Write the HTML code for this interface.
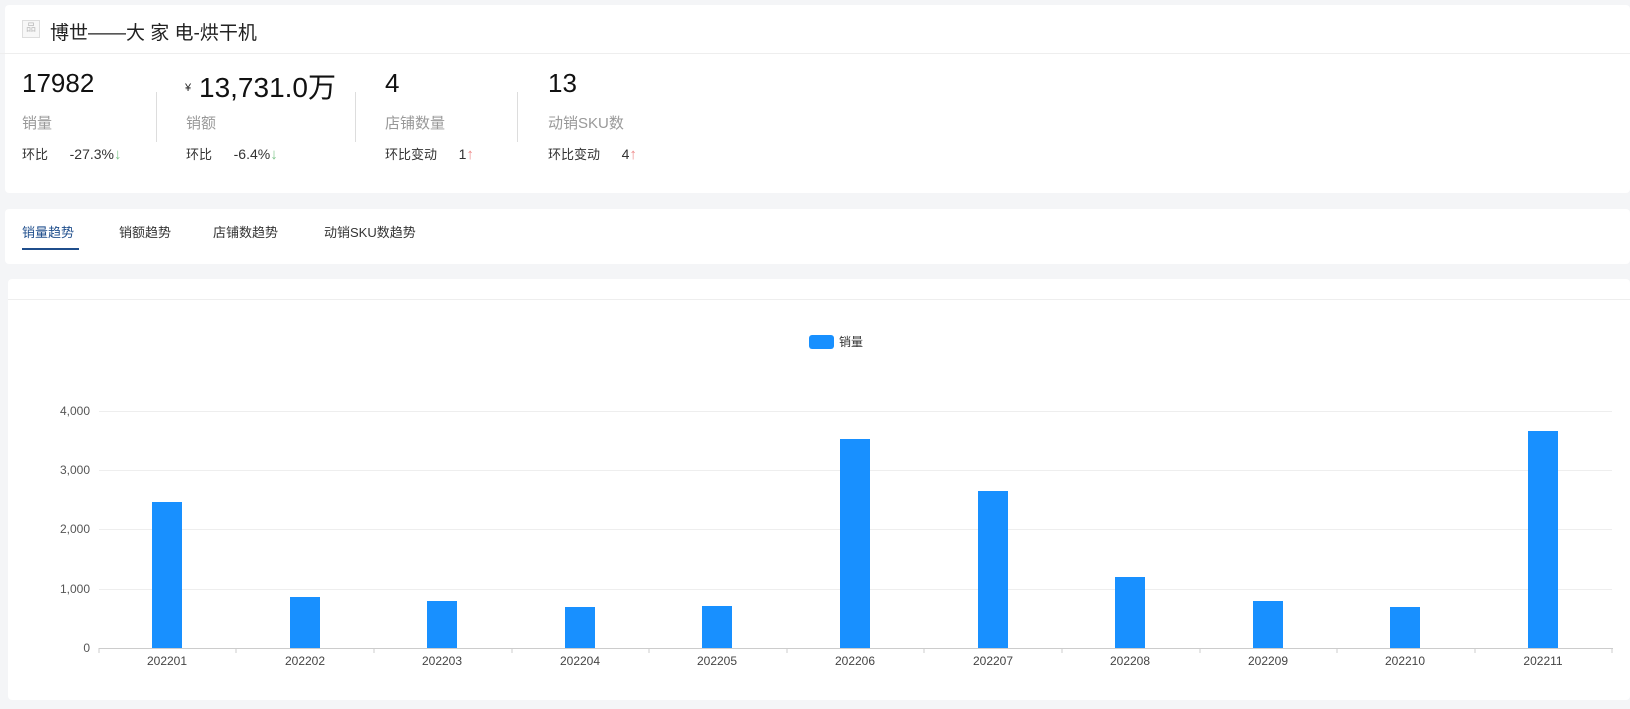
<!DOCTYPE html>
<html><head><meta charset="utf-8"><style>
body{margin:0;width:1630px;height:709px;background:#f4f5f7;font-family:"Liberation Sans","Noto Sans CJK SC",sans-serif;position:relative;overflow:hidden;color:#222}
.card{position:absolute;background:#fff;border-radius:4px}
.a{position:absolute;white-space:nowrap}
.num{font-size:26px;color:#111}
.lab{font-size:15px;color:#999}
.sub{font-size:13px;color:#333}
.v{font-size:14px}
.ar{font-size:15px}
.vd{position:absolute;width:1px;background:#ddd;top:92px;height:50px}
.tab{position:absolute;top:222px;font-size:13px;color:#333}
</style></head><body>
<div class="card" style="left:5px;top:5px;width:1625px;height:188px"></div>
<div class="a" style="left:0;top:53px;width:1630px;height:1px;background:#eee"></div>
<div class="a" style="left:22px;top:20px;width:16px;height:16px;border:1px solid #ddd;background:#f7f7f7;font-size:10px;color:#bbb;text-align:center;line-height:16px">品</div>
<div class="a" style="left:50px;top:18px;font-size:19px;color:#222">博世——大 家 电-烘干机</div>

<div class="a num" style="left:22px;top:68px">17982</div>
<div class="a lab" style="left:22px;top:112px">销量</div>
<div class="a sub" style="left:22px;top:144px">环比 <span class="v" style="margin-left:18px">-27.3%</span><span class="ar" style="color:#7cc48a">↓</span></div>
<div class="vd" style="left:156px"></div>

<div class="a" style="left:185px;top:82px;font-size:11px">¥</div>
<div class="a num" style="left:199px;top:66px;font-size:28px">13,731.0万</div>
<div class="a lab" style="left:186px;top:112px">销额</div>
<div class="a sub" style="left:186px;top:144px">环比 <span class="v" style="margin-left:18px">-6.4%</span><span class="ar" style="color:#7cc48a">↓</span></div>
<div class="vd" style="left:355px"></div>

<div class="a num" style="left:385px;top:68px">4</div>
<div class="a lab" style="left:385px;top:112px">店铺数量</div>
<div class="a sub" style="left:385px;top:144px">环比变动 <span class="v" style="margin-left:18px">1</span><span class="ar" style="color:#e88">↑</span></div>
<div class="vd" style="left:517px"></div>

<div class="a num" style="left:548px;top:68px">13</div>
<div class="a lab" style="left:548px;top:112px">动销SKU数</div>
<div class="a sub" style="left:548px;top:144px">环比变动 <span class="v" style="margin-left:18px">4</span><span class="ar" style="color:#e88">↑</span></div>

<div class="card" style="left:5px;top:209px;width:1625px;height:55px"></div>
<div class="tab" style="left:22px;color:#1f4e8c">销量趋势</div>
<div class="a" style="left:22px;top:248px;width:57px;height:2px;background:#1f4e8c"></div>
<div class="tab" style="left:119px">销额趋势</div>
<div class="tab" style="left:213px">店铺数趋势</div>
<div class="tab" style="left:324px">动销SKU数趋势</div>

<div class="card" style="left:8px;top:279px;width:1622px;height:421px"></div>
<div class="a" style="left:8px;top:299px;width:1622px;height:1px;background:#eee"></div>

<svg class="a" style="left:0;top:0" width="1630" height="709" font-family="Liberation Sans, sans-serif">
<rect x="809" y="335" width="25" height="14" rx="3" fill="#1890ff"/>
<text x="839" y="346" font-size="12" fill="#333" font-family="Liberation Sans, Noto Sans CJK SC, sans-serif">销量</text>
<g stroke="#eee" stroke-width="1">
<line x1="99" x2="1612" y1="411.5" y2="411.5"/>
<line x1="99" x2="1612" y1="470.5" y2="470.5"/>
<line x1="99" x2="1612" y1="529.5" y2="529.5"/>
<line x1="99" x2="1612" y1="589.5" y2="589.5"/>
</g>
<g font-size="12" fill="#555" text-anchor="end">
<text x="90" y="415">4,000</text><text x="90" y="474">3,000</text><text x="90" y="533">2,000</text><text x="90" y="593">1,000</text><text x="90" y="652">0</text>
</g>
<g fill="#1890ff">
<rect x="152" y="502" width="30" height="146"/>
<rect x="290" y="597" width="30" height="51"/>
<rect x="427" y="601" width="30" height="47"/>
<rect x="565" y="607" width="30" height="41"/>
<rect x="702" y="606" width="30" height="42"/>
<rect x="840" y="439" width="30" height="209"/>
<rect x="978" y="491" width="30" height="157"/>
<rect x="1115" y="577" width="30" height="71"/>
<rect x="1253" y="601" width="30" height="47"/>
<rect x="1390" y="607" width="30" height="41"/>
<rect x="1528" y="431" width="30" height="217"/>
</g>
<line x1="99" x2="1613" y1="648.5" y2="648.5" stroke="#ccc"/>
<g stroke="#ccc">
<line x1="99" x2="99" y1="648" y2="653"/><line x1="236" x2="236" y1="648" y2="653"/><line x1="374" x2="374" y1="648" y2="653"/><line x1="512" x2="512" y1="648" y2="653"/><line x1="649" x2="649" y1="648" y2="653"/><line x1="787" x2="787" y1="648" y2="653"/><line x1="924" x2="924" y1="648" y2="653"/><line x1="1062" x2="1062" y1="648" y2="653"/><line x1="1200" x2="1200" y1="648" y2="653"/><line x1="1337" x2="1337" y1="648" y2="653"/><line x1="1475" x2="1475" y1="648" y2="653"/><line x1="1612" x2="1612" y1="648" y2="653"/>
</g>
<g font-size="12" fill="#444" text-anchor="middle">
<text x="167" y="665">202201</text><text x="305" y="665">202202</text><text x="442" y="665">202203</text><text x="580" y="665">202204</text><text x="717" y="665">202205</text><text x="855" y="665">202206</text><text x="993" y="665">202207</text><text x="1130" y="665">202208</text><text x="1268" y="665">202209</text><text x="1405" y="665">202210</text><text x="1543" y="665">202211</text>
</g>
</svg>
</body></html>
